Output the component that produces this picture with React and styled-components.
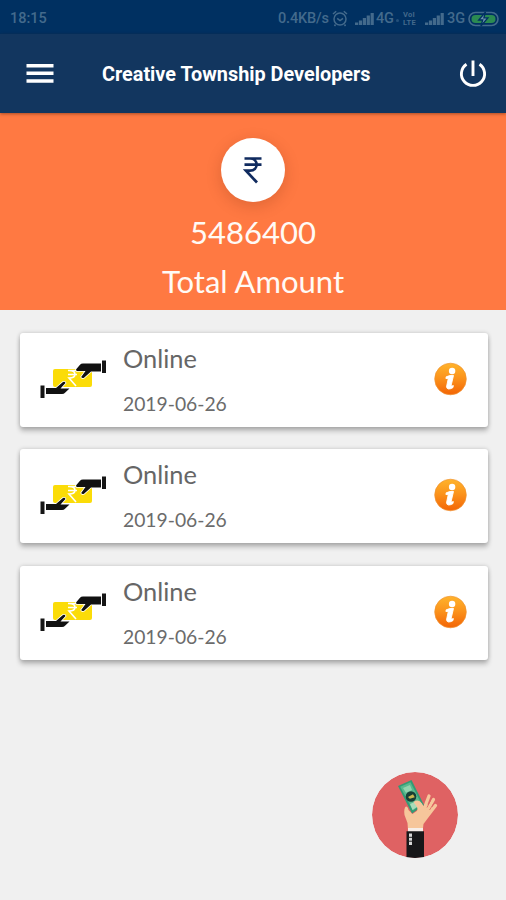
import React from "react";
import styled, { createGlobalStyle } from "styled-components";

const GlobalStyle = createGlobalStyle`
  * { box-sizing: border-box; }
  body { margin: 0; background: #f0f0f0; }
`;

const Screen = styled.div`
  position: relative;
  display: flex;
  flex-direction: column;
  width: 506px;
  height: 900px;
  overflow: hidden;
  background: #f0f0f0;
  font-family: Lato, sans-serif;
`;

const StatusBar = styled.div`
  display: flex;
  align-items: center;
  justify-content: space-between;
  height: 34px;
  padding: 2px 6px 0 10px;
  background: #003061;
  color: #436a8c;
  font: 500 14.5px/32px Roboto, sans-serif;
`;

const Clock = styled.span`
  padding-top: 1px;
`;

const StatusIcons = styled.div`
  display: flex;
  align-items: center;
  width: 222px;
  padding-top: 1px;
  white-space: nowrap;
  svg { display: block; flex: none; }
`;

const StatusText = styled.span`
  width: ${(p) => p.$width}px;
  flex: none;
  padding-left: ${(p) => p.$indent || 0}px;
  letter-spacing: ${(p) => p.$spacing || 0}px;
`;

const Dot = styled.i`
  flex: none;
  width: 3px;
  height: 3px;
  margin: 3px 4px 0 1px;
  border-radius: 50%;
  background: #23507a;
`;

const VoLte = styled.span`
  display: flex;
  flex: none;
  flex-direction: column;
  width: 22px;
  font: 700 7.5px/8px Roboto, sans-serif;
  letter-spacing: 0.3px;
`;

const AppBar = styled.header`
  display: flex;
  align-items: center;
  height: 79px;
  padding: 0 19px 0 26px;
  background: #12365f;
  box-shadow: 0 1px 3px rgba(60, 20, 0, 0.45);
  z-index: 1;
`;

const IconButton = styled.button`
  display: flex;
  flex: none;
  padding: 0;
  border: 0;
  background: none;
`;

const Title = styled.h1`
  flex: 1;
  margin: 2px 0 0 48px;
  color: #fff;
  font: 700 19.85px/28px Roboto, sans-serif;
  white-space: nowrap;
`;

const Summary = styled.section`
  display: flex;
  flex-direction: column;
  align-items: center;
  height: 197px;
  padding-top: 25px;
  background: #ff7942;
  color: #fffaf5;
`;

const Coin = styled.div`
  display: flex;
  align-items: center;
  justify-content: center;
  width: 64px;
  height: 64px;
  border-radius: 50%;
  background: #fff;
  box-shadow: 0 4px 16px rgba(90, 30, 0, 0.2);
`;

const SummaryLine = styled.div`
  margin-top: ${(p) => p.$gap}px;
  font-size: 31px;
  line-height: 40px;
`;

const List = styled.main`
  display: flex;
  flex-direction: column;
  gap: 22.5px;
  height: 360px;
  padding: 22.5px 18px 0 19.5px;
  overflow: hidden;
`;

const Card = styled.article`
  display: flex;
  flex: none;
  align-items: center;
  height: 94px;
  padding: 0 21px 2px 20.5px;
  border-radius: 3px;
  background: #fff;
  box-shadow: 0 4px 5px rgba(0, 0, 0, 0.24), 0 0 4px rgba(0, 0, 0, 0.18);
`;

const CardText = styled.div`
  display: flex;
  flex: 1;
  flex-direction: column;
  height: 92px;
  padding: 8px 0 0 16px;
`;

const Method = styled.div`
  color: #666;
  font-size: 25.4px;
  line-height: 34px;
`;

const PaidOn = styled.div`
  margin-top: 16px;
  color: #6b6b6b;
  font-size: 19.3px;
  line-height: 26px;
`;

const PayButton = styled.button`
  position: absolute;
  right: 48px;
  bottom: 42px;
  display: flex;
  padding: 0;
  border: 0;
  border-radius: 50%;
  background: none;
`;

const Alarm = () => (
  <svg width="16" height="17" viewBox="0 0 16 17" fill="none" stroke="#436a8c" strokeWidth="1.5">
    <circle cx="8" cy="9" r="6" />
    <path d="M5.2 8.4 8 10.6l3-2.2M1 4l3.2-2.8M15 4l-3.2-2.8M3.5 14.5 2.5 16M12.5 14.5l1 1.5" />
  </svg>
);

const Signal = () => (
  <svg width="19" height="14" viewBox="0 0 19 14" fill="#436a8c">
    <path d="M0 10.5h3.2V13H0zM3.9 8.5h3.2V13H3.9zM7.8 6h3.2v7H7.8zM11.7 3.5h3.2V13h-3.2zM15.6 1h3.2v12h-3.2z" />
  </svg>
);

const Battery = () => (
  <svg width="31" height="16" viewBox="0 0 31 16">
    <rect x="1" y="1.5" width="29" height="13" rx="6.5" fill="none" stroke="#436a8c" strokeWidth="1.6" />
    <rect x="3.5" y="4" width="24" height="8" rx="4" fill="#2b8a52" />
    <path d="m17.5 1-6.8 8h4l-1.8 6 7-8.2h-4z" fill="#6c93ad" stroke="#003061" strokeWidth="1.3" />
  </svg>
);

const Menu = () => (
  <svg width="28" height="22" viewBox="0 0 28 22" fill="#fff">
    <path d="M.5 1h27v3.5H.5zM.5 8.6h27v3.5H.5zM.5 16.2h27v3.5H.5z" />
  </svg>
);

const Power = () => (
  <svg width="28" height="30" viewBox="0 0 28 30" fill="none" stroke="#fff" strokeWidth="2.9">
    <path d="M14 1.5v15.5M7.5 5.2a11.6 11.6 0 1 0 13 0" />
  </svg>
);

const Rupee = () => (
  <svg width="20" height="28" viewBox="0 0 20 28" fill="none" stroke="#102b5f" strokeWidth="2.7">
    <path d="M1.5 2.5h17M1.5 8.6h17M1.5 2.5H7c8.8 0 8.8 12.2 0 12.2H3L14 26.5" />
  </svg>
);

const Exchange = () => (
  <svg width="67" height="44" viewBox="0 -2 67 44">
    <path d="M13 12q0-2 2-2h35q2 0 2 2v14q0 2-2 2H15q-2 0-2-2z" fill="#fbdc08" />
    <path d="M28 11.5h9M28 15.5h9M29 11.5c8 0 8 7.5 0 7.5l7 8" fill="none" stroke="#fff" strokeWidth="1.6" />
    <path
      d="M36.2 10.2 40 5.8q1-1.3 3-1.3h18v8H51l-7 6.3q-2 .8-2.8-.9l4.3-6H37q-1.5-.6-.8-1.7zM6 29h10l7-6q2-.7 2.5 1L20.5 29.5h9l-4.5 4.2q-1 1.3-3 1.3H6z"
      fill="#111" stroke="#fff" strokeWidth="1.6" paintOrder="stroke"
    />
    <path d="M62 1.5h4V14h-4zM.5 26.5h4V39h-4z" fill="#151515" />
  </svg>
);

const Info = () => (
  <svg width="33" height="34" viewBox="0 0 33 34">
    <defs>
      <linearGradient id="amber" x1="0" y1="0" x2="0" y2="1">
        <stop offset="0" stopColor="#ffb42b" />
        <stop offset=".48" stopColor="#fb921b" />
        <stop offset="1" stopColor="#f36405" />
      </linearGradient>
    </defs>
    <circle cx="16.5" cy="17" r="15.8" fill="url(#amber)" stroke="#ef9433" strokeWidth=".7" />
    <circle cx="18.1" cy="9" r="3.2" fill="#fff" />
    <path d="M12.2 14.8q4-1.8 7.3-1.4l-2.3 9.8q-.1 1.4 2.2.4l-.5 2.1q-5.8 3-6.4-.9l1.8-8.4-2.4.1z" fill="#fff" stroke="#fff" strokeWidth=".9" />
  </svg>
);

const HandWithCash = () => (
  <svg width="86" height="86" viewBox="0 0 86 86">
    <defs>
      <clipPath id="disc"><circle cx="43" cy="43" r="43" /></clipPath>
    </defs>
    <g clipPath="url(#disc)">
      <circle cx="43" cy="43" r="43" fill="#df6263" />
      <path d="M36 58 35.5 51 32.5 43q-1-7 1.5-8.5 2 0 2.5 3.5l4 4 10-7 4-3 6 3-3 9-6 8-1 8z" fill="#f6c69b" />
      <path d="m52 37 5-13M55 39l6.5-11.5M57 42l6.5-8.5" fill="none" stroke="#f6c69b" strokeWidth="3.3" strokeLinecap="round" />
      <path d="m55 35.5 3.5-7M57.5 38l4-6" fill="none" stroke="#df6263" strokeWidth=".8" />
      <path d="m26 14 13.5-6L52 33 40 41.5z" fill="#329b75" />
      <path d="M28.2 14.8 38.5 10.3 49.5 32l-8.5 6.5z" fill="#59b88d" />
      <path d="m31 16 7-3 2 5-6 2.8z" fill="#92d4ae" />
      <path d="m38 32 7-3 3 4-7.5 5z" fill="#a9dcb9" />
      <circle cx="39" cy="24.5" r="5.3" fill="#173f35" />
      <path d="m36 25 5-2.8 1.8 3-5 1.6z" fill="#c8b952" />
      <path d="M41.5 30q5-3.5 8.5 1.5L53 37l-2 8-10-1q6-4 4-9z" fill="#f6c69b" />
      <path d="M36 56h15v4H36z" fill="#f6eee9" />
      <path d="M34.5 59.3H52V87H34.5z" fill="#171719" />
      <path d="M37 61.5h3V73h-3z" fill="#d7d7d7" />
      <path d="M36 65.3h4M36 69.2h4" stroke="#222" />
    </g>
  </svg>
);

const payments = [
  { id: 1, method: "Online", date: "2019-06-26" },
  { id: 2, method: "Online", date: "2019-06-26" },
  { id: 3, method: "Online", date: "2019-06-26" },
];

export default function App() {
  return (
    <Screen>
      <GlobalStyle />
      <StatusBar>
        <Clock>18:15</Clock>
        <StatusIcons>
          <StatusText $width={54} $spacing={-0.15}>0.4KB/s</StatusText>
          <Alarm />
          <StatusText $width={7} />
          <Signal />
          <StatusText $width={21} $indent={2} $spacing={-0.3}>4G</StatusText>
          <Dot />
          <VoLte><span>VoI</span><span>LTE</span></VoLte>
          <Signal />
          <StatusText $width={24} $indent={3}>3G</StatusText>
          <Battery />
        </StatusIcons>
      </StatusBar>
      <AppBar>
        <IconButton aria-label="Menu"><Menu /></IconButton>
        <Title>Creative Township Developers</Title>
        <IconButton aria-label="Log out"><Power /></IconButton>
      </AppBar>
      <Summary>
        <Coin><Rupee /></Coin>
        <SummaryLine $gap={10}>5486400</SummaryLine>
        <SummaryLine $gap={9}>Total Amount</SummaryLine>
      </Summary>
      <List>
        {payments.map((p) => (
          <Card key={p.id}>
            <Exchange />
            <CardText>
              <Method>{p.method}</Method>
              <PaidOn>{p.date}</PaidOn>
            </CardText>
            <Info />
          </Card>
        ))}
      </List>
      <PayButton aria-label="Make a payment"><HandWithCash /></PayButton>
    </Screen>
  );
}
